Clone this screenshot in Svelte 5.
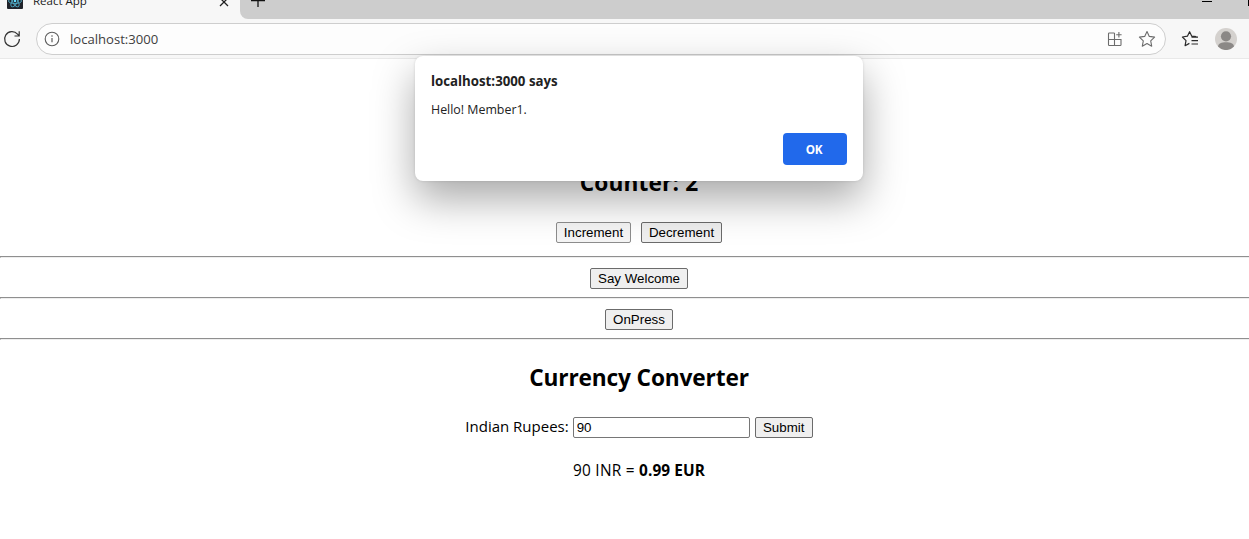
<script>
  let count = $state(2);
  let rupees = $state('90');
  let result = $state('0.99');
  const submit = () => (result = (Number(rupees) * 0.011).toFixed(2));
</script>

<div class="window">
  <div class="tabs">
    <div class="tab">
      <svg class="favicon" width="16" height="16" viewBox="0 0 16 16">
        <rect width="16" height="16" rx="1" fill="#20232a" />
        <g fill="none" stroke="#4fa9c4" stroke-width="0.9">
          <ellipse cx="8" cy="8" rx="6.5" ry="2.6" />
          <ellipse cx="8" cy="8" rx="6.5" ry="2.6" transform="rotate(60 8 8)" />
          <ellipse cx="8" cy="8" rx="6.5" ry="2.6" transform="rotate(120 8 8)" />
        </g>
        <circle cx="8" cy="8" r="1.3" fill="#61dafb" />
      </svg>
      <span class="title">React App</span>
      <svg class="close" width="10" height="10" viewBox="0 0 10 10">
        <path d="M1 1l8 8M9 1L1 9" stroke="#222" stroke-width="1.3" />
      </svg>
    </div>
    <div class="strip">
      <svg class="plus" width="14" height="14" viewBox="0 0 14 14">
        <path d="M7 0v14M0 7.5h14" stroke="#111" stroke-width="1.3" />
      </svg>
      <span class="minimize"></span>
      <span class="maximize"></span>
    </div>
  </div>

  <div class="toolbar">
    <svg class="reload" width="18" height="18" viewBox="0 0 18 18" fill="none" stroke="#333" stroke-width="1.2">
      <path d="M16.4 9A7.4 7.4 0 1 1 14.5 4.1L16 5.7M16.2 1.3v4.7h-4.7" />
    </svg>
    <div class="address">
      <svg class="info" width="16" height="16" viewBox="0 0 16 16">
        <circle cx="8" cy="8" r="6.8" fill="none" stroke="#5c5c5c" stroke-width="1.1" />
        <path d="M8 7v4.2" stroke="#5c5c5c" stroke-width="1.2" />
        <circle cx="8" cy="5" r="0.8" fill="#5c5c5c" />
      </svg>
      <span class="url">localhost:3000</span>
      <svg class="apps" width="16" height="16" viewBox="0 0 16 16" fill="none" stroke="#6c6c6c" stroke-width="1.1">
        <path d="M7.5 2H2.3Q1.5 2 1.5 2.8v10.9q0 .8.8.8h10.9q.8 0 .8-.8V8.5H1.5M7.5 2v12.5M11.9 1v5.4M9.2 3.7h5.4" />
      </svg>
      <svg class="star" width="18" height="18" viewBox="0 0 18 18" fill="none" stroke="#6c6c6c" stroke-width="1.1" stroke-linejoin="round">
        <path d="M9 1.5l2.3 4.9 5.3.7-3.9 3.7 1 5.4L9 13.6l-4.7 2.6 1-5.4-3.9-3.7 5.3-.7z" />
      </svg>
    </div>
    <svg class="favorites" width="18" height="18" viewBox="0 0 18 18" fill="none" stroke="#2b2b2b" stroke-width="1.2" stroke-linejoin="round">
      <path d="M15.2 6.7l-4.4-.5L8.6 1.7 6.4 6.2l-5 .8 3.6 3.6-.9 5.1 4.3-2.3M10.5 7.2h6.5M10.5 10.6h6.5M10.5 14h6.5" />
    </svg>
    <svg class="avatar" width="22" height="22" viewBox="0 0 22 22">
      <circle cx="11" cy="11" r="11" fill="#d4d1ce" />
      <circle cx="11" cy="8.3" r="5.1" fill="#8b8886" />
      <path d="M3 18.6C3.3 15.6 6.5 14.3 11 14.3s7.7 1.3 8 4.3A11 11 0 0 1 3 18.6z" fill="#8b8886" />
    </svg>
  </div>

  <main>
    <h2 class="counter">Counter: {count}</h2>
    <div class="row pair">
      <button class="soft" style:width="75px" onclick={() => count++}>Increment</button>
      <button style:width="81px" onclick={() => count--}>Decrement</button>
    </div>
    <hr />
    <div class="row"><button style:width="98px">Say Welcome</button></div>
    <hr />
    <div class="row"><button style:width="68px">OnPress</button></div>
    <hr />
    <h2 class="converter">Currency Converter</h2>
    <div class="row form">
      <label for="inr">Indian Rupees:</label>
      <input id="inr" bind:value={rupees} />
      <button style:width="58px" onclick={submit}>Submit</button>
    </div>
    <p>{rupees} INR = <strong>{result} EUR</strong></p>
  </main>

  <div class="dialog" role="alertdialog">
    <div class="heading">localhost:3000 says</div>
    <div class="message">Hello! Member1.</div>
    <button class="ok">OK</button>
  </div>
</div>

<style>
  .window {
    position: relative;
    width: 1249px;
    height: 539px;
    overflow: hidden;
    background: #fff;
    color: #000;
    font-family: 'Open Sans', 'Noto Sans', sans-serif;
  }
  .window * { box-sizing: border-box; }
  svg { display: block; flex: none; }

  .tabs { display: flex; height: 19px; background: #f7f7f7; }
  .tab { display: flex; width: 240px; padding-left: 7px; }
  .favicon { margin-top: -7px; }
  .title {
    margin: -8px 0 0 10px;
    width: 186px;
    font-size: 11.5px;
    line-height: 18px;
    color: #1b1b1b;
  }
  .close { margin-top: -3px; }
  .strip {
    display: flex;
    flex: 1;
    background: #cdcdcd;
    border-bottom-left-radius: 8px;
  }
  .plus { margin: -7px 0 0 11px; }
  .minimize { width: 10px; height: 1px; margin: 1px 36px 0 auto; background: #000; }
  .maximize { width: 1px; height: 6px; background: #000; }

  .toolbar {
    display: flex;
    align-items: center;
    height: 40px;
    padding-left: 3px;
    background: #f7f7f7;
    border-bottom: 1px solid #e9e9e9;
  }
  .address {
    display: flex;
    align-items: center;
    width: 1130px;
    height: 32px;
    margin-left: 15px;
    padding: 0 9px 0 7px;
    border: 1px solid #cecece;
    border-radius: 16px;
    background: #fdfdfd;
  }
  .url { margin-left: 10px; font-size: 13.1px; line-height: 20px; color: #404040; }
  .apps { margin-left: auto; }
  .star { margin-left: 15px; }
  .favorites { margin-left: 15px; }
  .avatar { margin-left: 16px; }

  main { width: 1278px; padding-top: 108px; text-align: center; }
  h2 { margin: 0; height: 32px; font-size: 22.7px; line-height: 32px; font-weight: 700; }
  .counter { letter-spacing: 0.15px; }
  .row { display: flex; justify-content: center; height: 39px; padding-top: 10px; }
  .pair { gap: 10px; height: 57px; padding-top: 23px; }
  hr { height: 2px; margin: 0; border: 1px solid; border-color: #8f8f8f #eee #eee #8f8f8f; }
  button {
    height: 21px;
    padding: 0;
    border: 1px solid #6b6b6b;
    border-radius: 2px;
    background: #efefef;
    color: #000;
    font: 13.333px/19px 'Liberation Sans', Arial, sans-serif;
    white-space: nowrap;
  }
  .soft { border-color: #8d8d8d; background: #f5f5f5; }
  .converter { margin-top: 22px; letter-spacing: -0.15px; }
  .form { height: 66px; padding-top: 23px; }
  label { font-size: 15px; line-height: 19px; }
  input {
    width: 177px;
    height: 21px;
    margin: 0 5px 0 4px;
    padding: 0 3px;
    border: 1px solid #767676;
    border-radius: 2px;
    background: #fff;
    color: #000;
    font: 13.333px 'Liberation Sans', Arial, sans-serif;
  }
  p { margin: 0; font-size: 15.4px; line-height: 22px; letter-spacing: 0.25px; }
  strong { letter-spacing: 0.1px; }

  .dialog {
    position: absolute;
    left: 415px;
    top: 56px;
    display: flex;
    flex-direction: column;
    width: 448px;
    height: 125px;
    padding: 15px 16px 16px;
    border-radius: 8px;
    background: #fff;
    box-shadow: 0 0 3px rgba(0, 0, 0, 0.12), 0 18px 42px rgba(0, 0, 0, 0.34);
    color: #222;
  }
  .heading { font-size: 13.25px; line-height: 20px; font-weight: 700; }
  .message { margin-top: 9px; font-size: 12.4px; line-height: 20px; }
  .ok {
    align-self: flex-end;
    width: 64px;
    height: 32px;
    margin-top: auto;
    padding-right: 2px;
    border: 0;
    border-radius: 4px;
    background: #2169eb;
    color: #fff;
    font: 700 11.7px/32px 'Open Sans', 'Noto Sans', sans-serif;
    letter-spacing: -0.2px;
  }
</style>
